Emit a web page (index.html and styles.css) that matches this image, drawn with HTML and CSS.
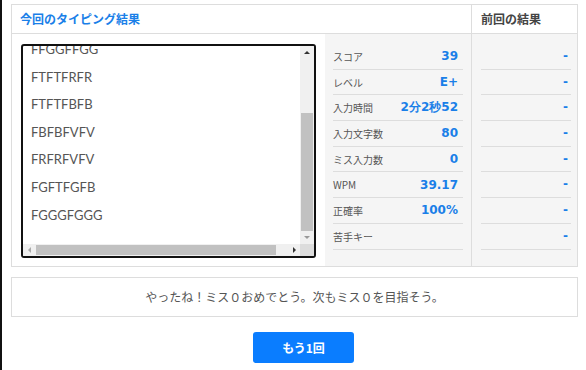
FILE: index.html
```html
<!DOCTYPE html>
<html lang="ja">
<head>
    <meta charset="UTF-8">
    <meta name="viewport" content="width=device-width, initial-scale=1.0">
    <title>タイピング結果</title>
    <link rel="stylesheet" href="styles.css">
</head>
<body>
    <div id="result-box">
        <div class="col-main">
            <div class="head head-now">今回のタイピング結果</div>
            <div class="main-body">
                <div class="log-panel">
                    <div class="log">
                        <div class="log-lines">
                            <div>FFGGFFGG</div>
                            <div>FTFTFRFR</div>
                            <div>FTFTFBFB</div>
                            <div>FBFBFVFV</div>
                            <div>FRFRFVFV</div>
                            <div>FGFTFGFB</div>
                            <div>FGGGFGGG</div>
                        </div>
                        <div class="vbar">
                            <div class="arrow"><span class="tri-up"></span></div>
                            <div class="vtrack"><div class="vthumb"></div></div>
                            <div class="arrow"><span class="tri-down"></span></div>
                        </div>
                        <div class="hbar">
                            <div class="arrow-h"><span class="tri-left"></span></div>
                            <div class="htrack"><div class="hthumb"></div></div>
                            <div class="arrow-h"><span class="tri-right"></span></div>
                        </div>
                        <div class="corner"></div>
                    </div>
                </div>
                <div class="stats">
                    <div class="stat"><span class="label">スコア</span><span class="value">39</span></div>
                    <div class="stat"><span class="label">レベル</span><span class="value">E+</span></div>
                    <div class="stat"><span class="label">入力時間</span><span class="value">2分2秒52</span></div>
                    <div class="stat"><span class="label">入力文字数</span><span class="value">80</span></div>
                    <div class="stat"><span class="label">ミス入力数</span><span class="value">0</span></div>
                    <div class="stat"><span class="label">WPM</span><span class="value">39.17</span></div>
                    <div class="stat"><span class="label">正確率</span><span class="value">100%</span></div>
                    <div class="stat"><span class="label">苦手キー</span><span class="value"></span></div>
                </div>
            </div>
        </div>
        <div class="col-prev">
            <div class="head head-prev">前回の結果</div>
            <div class="prev-body">
                <div class="prev-row">-</div>
                <div class="prev-row">-</div>
                <div class="prev-row">-</div>
                <div class="prev-row">-</div>
                <div class="prev-row">-</div>
                <div class="prev-row">-</div>
                <div class="prev-row">-</div>
                <div class="prev-row">-</div>
            </div>
        </div>
    </div>

    <div id="message">やったね！ミス０おめでとう。次もミス０を目指そう。</div>

    <button id="retry-button">もう1回</button>
</body>
</html>
```

FILE: styles.css
```css
body {
    font-family: "Noto Sans CJK JP", "DejaVu Sans", sans-serif;
    margin: 0;
    padding: 4px 8px 0 9px;
    height: 370px;
    box-sizing: border-box;
    border-left: 2px solid #111;
    background: #fff;
    color: #555;
}

#result-box {
    display: flex;
    width: 567px;
    height: 263px;
    box-sizing: border-box;
    border: 1px solid #ddd;
}

.col-main {
    flex: 1;
    display: flex;
    flex-direction: column;
}

.col-prev {
    width: 106px;
    box-sizing: border-box;
    display: flex;
    flex-direction: column;
    border-left: 1px solid #ddd;
}

.head {
    height: 28px;
    line-height: 28px;
    border-bottom: 1px solid #ddd;
    font-size: 12px;
    font-weight: bold;
    background: #fff;
}

.head-now {
    color: #1a7fe8;
    padding-left: 8px;
}

.head-prev {
    color: #444;
    padding-left: 9px;
}

.main-body {
    flex: 1;
    display: flex;
}

.log-panel {
    width: 313px;
    box-sizing: border-box;
    padding: 10px 0 0 9px;
    background: #fff;
}

.log {
    display: grid;
    grid-template-columns: 1fr 14px;
    grid-template-rows: 1fr 12px;
    width: 295px;
    height: 214px;
    box-sizing: border-box;
    border: 2px solid #111;
    border-radius: 3px;
    overflow: hidden;
    background: #fff;
}

.log-lines {
    overflow: hidden;
    padding-left: 8px;
    font-family: "Lato", "Open Sans", sans-serif;
    font-size: 13px;
    color: #555;
}

.log-lines div {
    height: 27.6px;
    line-height: 27.6px;
}

.log-lines div:first-child {
    margin-top: -10px;
}

.vbar {
    display: flex;
    flex-direction: column;
    background: #f0f0f0;
}

.arrow {
    height: 13px;
    display: flex;
    align-items: center;
    justify-content: center;
}

.vtrack {
    flex: 1;
    display: flex;
    flex-direction: column;
    justify-content: flex-end;
    align-items: center;
}

.vthumb {
    width: 12px;
    height: 118px;
    background: #c1c1c1;
}

.hbar {
    display: flex;
    background: #f0f0f0;
}

.arrow-h {
    width: 12px;
    display: flex;
    align-items: center;
    justify-content: center;
}

.htrack {
    flex: 1;
    display: flex;
    align-items: center;
}

.hthumb {
    width: 240px;
    height: 10px;
    margin-left: 1px;
    background: #c1c1c1;
}

.corner {
    background: #dcdcdc;
}

.tri-up {
    border-left: 3px solid transparent;
    border-right: 3px solid transparent;
    border-bottom: 3px solid #333;
}

.tri-down {
    border-left: 3px solid transparent;
    border-right: 3px solid transparent;
    border-top: 3px solid #999;
}

.tri-left {
    border-top: 3px solid transparent;
    border-bottom: 3px solid transparent;
    border-right: 3px solid #aaa;
}

.tri-right {
    border-top: 3px solid transparent;
    border-bottom: 3px solid transparent;
    border-left: 3px solid #333;
}

.stats {
    width: 146px;
    box-sizing: border-box;
    padding: 10px 8px 0 8px;
    background: #f5f5f5;
}

.stat {
    height: 25.7px;
    box-sizing: border-box;
    display: flex;
    justify-content: space-between;
    align-items: center;
    padding-right: 5px;
    border-bottom: 1px solid #ddd;
}

.label {
    font-size: 10px;
    color: #555;
}

.value {
    font-family: "DejaVu Sans", sans-serif;
    font-size: 12px;
    font-weight: bold;
    color: #1a7fe8;
}

.prev-body {
    flex: 1;
    padding: 10px 6px 0 9px;
    background: #f5f5f5;
}

.prev-row {
    height: 25.7px;
    box-sizing: border-box;
    line-height: 25px;
    text-align: right;
    padding-right: 3px;
    border-bottom: 1px solid #ddd;
    font-family: "DejaVu Sans", sans-serif;
    font-size: 12px;
    font-weight: bold;
    color: #1a7fe8;
}

#message {
    width: 567px;
    height: 40px;
    box-sizing: border-box;
    margin-top: 10px;
    border: 1px solid #ddd;
    line-height: 38px;
    text-align: center;
    font-size: 12px;
    color: #555;
}

#retry-button {
    display: block;
    margin: 15px 0 0 242px;
    width: 101px;
    height: 31px;
    border: none;
    border-radius: 3px;
    background: #0a7dff;
    color: #fff;
    font-family: "Noto Sans CJK JP", sans-serif;
    font-size: 12px;
    font-weight: bold;
    cursor: pointer;
}
```
